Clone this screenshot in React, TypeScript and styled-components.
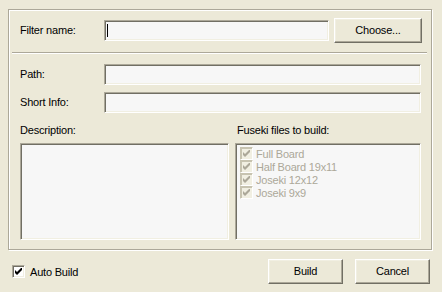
import React from 'react';
import styled, {createGlobalStyle} from 'styled-components';

const Global = createGlobalStyle`
    html, body {
        margin:0;
        padding:0;
        background:#ECE9D8;
    }
    * { box-sizing:border-box; }
`;

const Dialog = styled.div`
    width:442px;
    height:292px;
    background:#ECE9D8;
    font-family:"Liberation Sans", Arial, sans-serif;
    font-size:11px;
    letter-spacing:-0.2px;
    color:#000;
    padding-top:9px;
    padding-left:8px;
    display:flex;
    flex-direction:column;
`;

const Frame = styled.div`
    width:424px;
    height:241px;
    border:1px solid #ACA899;
    box-shadow:inset 1px 1px 0 #fff, 1px 1px 0 #fff;
    display:flex;
    flex-direction:column;
`;

const Row = styled.div<{top:number}>`
    display:flex;
    align-items:center;
    padding-left:11px;
    margin-top:${({top})=>top}px;
`;

const Label = styled.div`
    width:84px;
    line-height:13px;
`;

const Field = styled.div<{w:number}>`
    width:${({w})=>w}px;
    height:21px;
    background:#F7F7F7;
    border-top:1px solid #ACA899;
    border-left:1px solid #ACA899;
    border-right:1px solid #fff;
    border-bottom:1px solid #fff;
    box-shadow:inset 1px 1px 0 #716F64, inset -1px -1px 0 #F1EFE2;
    position:relative;
`;

const Caret = styled.div`
    position:absolute;
    left:2px;
    top:3px;
    width:1px;
    height:13px;
    background:#000;
`;

const Button = styled.div<{w:number; gap?:number}>`
    width:${({w})=>w}px;
    height:25px;
    margin-left:${({gap})=>gap || 0}px;
    display:flex;
    align-items:center;
    justify-content:center;
    background:#ECE9D8;
    border-top:1px solid #fff;
    border-left:1px solid #fff;
    border-right:1px solid #716F64;
    border-bottom:1px solid #716F64;
    box-shadow:inset -1px -1px 0 #ACA899, inset 1px 1px 0 #F1EFE2;
    line-height:13px;
`;

const Separator = styled.div`
    margin:9px 4px 0 3px;
    height:2px;
    border-top:1px solid #ACA899;
    border-bottom:1px solid #fff;
`;

const Columns = styled.div`
    display:flex;
    gap:6px;
    padding-left:11px;
    margin-top:11px;
`;

const Column = styled.div<{w:number; indent:number}>`
    width:${({w})=>w}px;
    display:flex;
    flex-direction:column;
    & > span {
        line-height:13px;
        height:13px;
        padding-left:${({indent})=>indent}px;
        margin-bottom:6px;
    }
`;

const Box = styled.div`
    height:97px;
    background:#F7F7F7;
    border-top:1px solid #ACA899;
    border-left:1px solid #ACA899;
    border-right:1px solid #fff;
    border-bottom:1px solid #fff;
    box-shadow:inset 1px 1px 0 #716F64, inset -1px -1px 0 #F1EFE2;
    padding:3px 0 0 4px;
`;

const Item = styled.div`
    display:flex;
    align-items:center;
    height:13px;
    color:#ACA899;
    gap:3px;
`;

const Check = styled.div<{disabled?:boolean}>`
    width:13px;
    height:13px;
    flex:none;
    background:${({disabled})=>disabled ? '#F1EFE2' : '#fff'};
    border-top:1px solid ${({disabled})=>disabled ? '#C7C3B0' : '#ACA899'};
    border-left:1px solid ${({disabled})=>disabled ? '#C7C3B0' : '#ACA899'};
    border-right:1px solid #fff;
    border-bottom:1px solid #fff;
    box-shadow:${({disabled})=>disabled ? 'inset 1px 1px 0 #C7C3B0' : 'inset 1px 1px 0 #716F64, inset -1px -1px 0 #F1EFE2'};
    display:flex;
    align-items:center;
    justify-content:center;
`;

const Footer = styled.div`
    display:flex;
    align-items:center;
    margin-top:9px;
    padding-left:4px;
    padding-right:12px;
`;

const AutoBuild = styled.div`
    display:flex;
    align-items:center;
    gap:5px;
    flex:1;
`;

const ButtonGroup = styled.div`
    display:flex;
    gap:12px;
`;

const Tick: React.FC<{color:string}> = ({color}) => (
    <svg width="7" height="7" viewBox="0 0 7 7">
        <path d="M0 2v3l2 2 5-5V-1L2 4z" fill={color} />
    </svg>
);

const fuseki = ['Full Board', 'Half Board 19x11', 'Joseki 12x12', 'Joseki 9x9'];

const App: React.FC = () => {
    return <Dialog>
        <Global />
        <Frame>
            <Row top={8}>
                <Label>Filter name:</Label>
                <Field w={225}><Caret /></Field>
                <Button w={88} gap={5}>Choose...</Button>
            </Row>
            <Separator />
            <Row top={10}>
                <Label>Path:</Label>
                <Field w={317} />
            </Row>
            <Row top={7}>
                <Label>Short Info:</Label>
                <Field w={317} />
            </Row>
            <Columns>
                <Column w={209} indent={0}>
                    <span>Description:</span>
                    <Box />
                </Column>
                <Column w={186} indent={2}>
                    <span>Fuseki files to build:</span>
                    <Box>
                        {fuseki.map(f =>
                            <Item key={f}>
                                <Check disabled><Tick color="#ACA899" /></Check>
                                {f}
                            </Item>
                        )}
                    </Box>
                </Column>
            </Columns>
        </Frame>
        <Footer>
            <AutoBuild>
                <Check><Tick color="#000" /></Check>
                Auto Build
            </AutoBuild>
            <ButtonGroup>
                <Button w={75}>Build</Button>
                <Button w={75}>Cancel</Button>
            </ButtonGroup>
        </Footer>
    </Dialog>;
}

export default App;
